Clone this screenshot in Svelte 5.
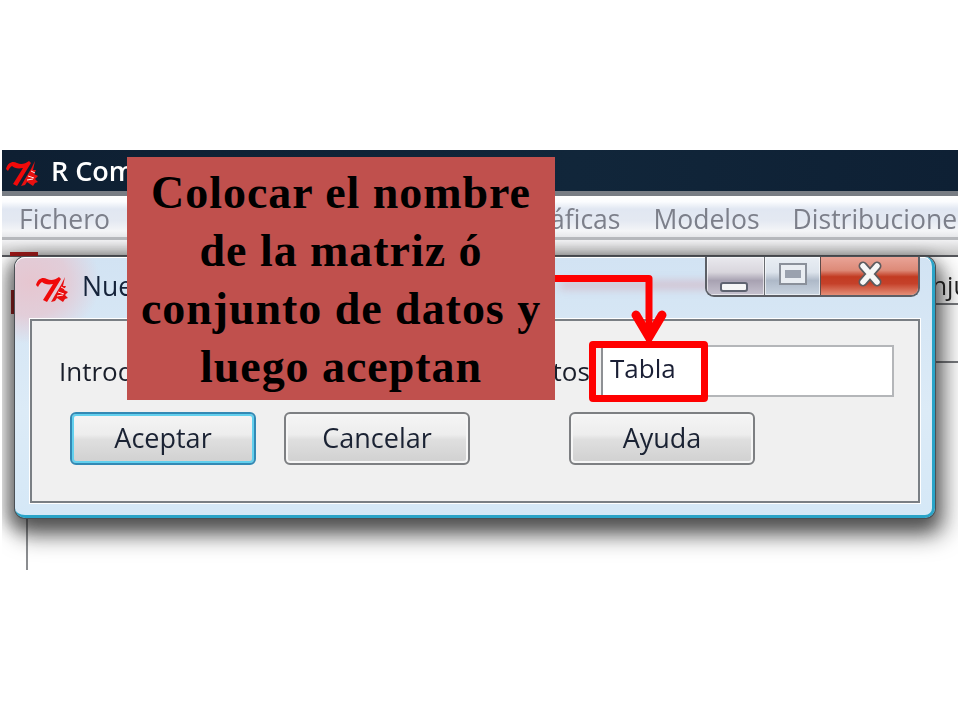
<script>
  const menu = ['Gráficas', 'Modelos', 'Distribuciones'];
  const buttons = [
    { label: 'Aceptar', focus: true },
    { label: 'Cancelar', focus: false },
    { label: 'Ayuda', focus: false }
  ];
  const callout = ['Colocar el nombre', 'de la matriz ó', 'conjunto de datos y', 'luego aceptan'];
</script>

<svg class="defs" width="0" height="0" aria-hidden="true">
  <symbol id="tk" viewBox="0 0 34 28">
    <path d="M1 10C3 3 8 2 12 4C16 6 20 5 24 2L26 4L12 27L8 25L18 9C13 10 9 9 7 7C5 8 4 10 3 12Z" fill="#f00a0a" />
    <path d="M30 2L26 10L20 20L16 27L20 26L22 23L28 27L30 24L33 23L30 20L33 17L29 15L31 11L28 11Z" fill="#e81010" />
    <path d="M23 17l6 2M22 21l6-1M26 12l4 2" stroke="#fff" stroke-width="0.9" fill="none" />
  </symbol>
</svg>

<div class="page">
  <section class="shot">
    <header class="appbar">
      <svg class="tk big"><use href="#tk" /></svg>
      <span class="apptitle">R Commander</span>
    </header>
    <nav class="menu">
      <span>Fichero</span>
      {#each menu as item, i}
        <span class:far={i === 0}>{item}</span>
      {/each}
    </nav>
    <div class="toolbar"></div>
    <div class="workspace"></div>
    <i class="mark top"></i>
    <i class="mark side"></i>
    <i class="sideline one"></i>
    <i class="sideline two"></i>
    <span class="behind">Conjunto</span>

    <div class="dialog">
      <div class="dtitle">
        <svg class="tk small"><use href="#tk" /></svg>
        <span class="dname">Nuevo conjunto</span>
        <i class="streak"></i>
        <div class="controls">
          <span class="ctl min"><i></i></span>
          <span class="ctl max"><i></i></span>
          <span class="ctl close">
            <svg width="30" height="28" viewBox="0 0 30 28">
              <path d="M8 6L22 22M22 6L8 22" fill="none" stroke="#5c5c60" stroke-width="9" stroke-linecap="round" />
              <path d="M8 6L22 22M22 6L8 22" fill="none" stroke="#f6f6f6" stroke-width="5.5" stroke-linecap="round" />
            </svg>
          </span>
        </div>
      </div>
      <div class="panel">
        <div class="row">
          <label for="nombre">Introduzca el nombre del conjunto de datos</label>
          <input id="nombre" value="Tabla" />
        </div>
        <div class="actions">
          {#each buttons as b}
            <button class:focus={b.focus}>{b.label}</button>
          {/each}
        </div>
      </div>
    </div>
  </section>

  <div class="callout">
    {#each callout as line}
      <div>{line}</div>
    {/each}
  </div>
  <div class="redbox"></div>
  <svg class="arrow" width="120" height="72" viewBox="0 0 120 72">
    <path d="M0 3.5H94V58" fill="none" stroke="#f00" stroke-width="7" stroke-linejoin="round" />
    <path d="M81 40L94 62L107 40" fill="none" stroke="#f00" stroke-width="9" stroke-linecap="round" />
  </svg>
</div>

<style>
  :global(body) {
    margin: 0;
    background: #fff;
  }
  .defs {
    position: absolute;
  }
  .page {
    position: relative;
    width: 960px;
    height: 720px;
    padding: 150px 2px;
    box-sizing: border-box;
    background: #fff;
    overflow: hidden;
  }
  .shot {
    position: relative;
    width: 956px;
    height: 420px;
    overflow: hidden;
    background: #fff;
    font-family: "Open Sans", "Noto Sans", sans-serif;
    filter: blur(0.6px);
  }
  .appbar {
    height: 41px;
    display: flex;
    align-items: center;
    gap: 12px;
    padding-left: 3px;
    background: linear-gradient(90deg, #0e1f32, #11263a 60%, #0e2034);
    border-bottom: 5px solid #787d84;
    box-sizing: content-box;
  }
  .tk.big {
    width: 34px;
    height: 28px;
    margin-top: 5px;
  }
  .apptitle {
    color: #fff;
    font-size: 27px;
    font-weight: 600;
  }
  .menu {
    height: 44px;
    display: flex;
    align-items: center;
    gap: 33px;
    padding: 4px 0 0 17px;
    color: #7c7f8a;
    font-size: 26.5px;
    white-space: nowrap;
    background: linear-gradient(180deg, #fff 0, #fbfcfe 14%, #e1e7f2 32%, #e4e9f2 60%, #f4f5f7 85%, #e6e7ea 100%);
    border-bottom: 3px solid #b6b8bc;
    box-sizing: border-box;
  }
  .far {
    margin-left: 377px;
  }
  .toolbar {
    height: 15px;
    background: linear-gradient(180deg, #f1f1f3, #c8c8c8);
    border-bottom: 2px solid #55575c;
  }
  .workspace {
    position: absolute;
    left: 24px;
    top: 104px;
    bottom: 0;
    width: 2px;
    background: #8b8d90;
  }
  .mark {
    position: absolute;
    background: #a01818;
  }
  .mark.top {
    left: 8px;
    top: 102px;
    width: 28px;
    height: 4px;
  }
  .mark.side {
    left: 9px;
    top: 140px;
    width: 5px;
    height: 24px;
  }
  .sideline {
    position: absolute;
    left: 930px;
    right: 0;
    height: 2px;
    background: #77797d;
  }
  .sideline.one {
    top: 153px;
  }
  .sideline.two {
    top: 211px;
  }
  .behind {
    position: absolute;
    left: 899px;
    top: 118px;
    font-size: 25px;
    color: #222;
  }
  .dialog {
    position: absolute;
    left: 13px;
    top: 107px;
    width: 920px;
    height: 261px;
    box-sizing: border-box;
    padding: 0 13px 12px 15px;
    display: flex;
    flex-direction: column;
    border-radius: 10px;
    background:
      radial-gradient(ellipse 70px 62px at 15px 25px, #e6c6d0 0, rgba(230, 198, 208, 0.75) 55%, rgba(230, 198, 208, 0) 100%),
      linear-gradient(180deg, #d2e3f3, #dcebf7 60%, #d5e8f7);
    border-right: 3px solid #2aa4c8;
    border-bottom: 3px solid #2aa4c8;
    box-shadow: inset 0 1px 0 #fff, 0 0 0 1px #4b5055, 5px 13px 22px 5px rgba(20, 20, 20, 0.55), -4px 6px 16px 5px rgba(20, 20, 20, 0.42);
  }
  .dtitle {
    height: 62px;
    flex: none;
    display: flex;
    align-items: flex-start;
    position: relative;
  }
  .tk.small {
    width: 34px;
    height: 28px;
    margin: 18px 0 0 5px;
  }
  .dname {
    margin: 11px 0 0 13px;
    font-size: 26.5px;
    color: #15233a;
    white-space: nowrap;
  }
  .streak {
    position: absolute;
    left: 530px;
    top: 24px;
    width: 150px;
    height: 8px;
    background: rgba(205, 120, 135, 0.35);
    filter: blur(4px);
  }
  .controls {
    position: absolute;
    left: 675px;
    top: 0;
    width: 215px;
    height: 40px;
    display: flex;
    box-sizing: border-box;
    border: 2px solid #5c5f66;
    border-top: none;
    border-radius: 0 0 9px 9px;
    overflow: hidden;
  }
  .ctl {
    display: flex;
    align-items: center;
    justify-content: center;
    box-sizing: border-box;
  }
  .min {
    width: 58px;
    padding-right: 4px;
    background: linear-gradient(180deg, #e9e9ee 0, #d9d6dd 40%, #a8a2b2 62%, #c6c2cf 100%);
    border-right: 1px solid #6a6d72;
    box-shadow: inset 0 0 0 1px rgba(255,255,255,.6);
  }
  .min i {
    width: 24px;
    height: 6px;
    margin-top: 22px;
    background: #f6f6f6;
    border: 2px solid #5f6370;
    border-radius: 3px;
  }
  .max {
    width: 56px;
    background: linear-gradient(180deg, #e9eef4 0, #dde4ec 40%, #aeb9c8 62%, #c9d4e0 100%);
    border-right: 1px solid #5e4a48;
    box-shadow: inset 0 0 0 1px rgba(255,255,255,.6);
  }
  .max i {
    width: 16px;
    height: 8px;
    flex: none;
    margin-bottom: 4px;
    border: solid #e9edf2;
    border-width: 5px 4px;
    outline: 2px solid #8a909a;
    background: #9aa1ae;
    box-sizing: content-box;
  }
  .close {
    flex: 1;
    padding-bottom: 5px;
    background: linear-gradient(180deg, #e9a497 0, #dd8a78 35%, #c23b22 52%, #c5412a 70%, #e48f78 100%);
  }
  .panel {
    flex: 1;
    box-sizing: border-box;
    background: #f0f0f0;
    border: 2px solid #7a7f84;
    box-shadow: 0 0 0 1px #fff;
    padding: 24px 24px 0 27px;
    margin-right: -1px;
  }
  .row {
    display: flex;
    align-items: center;
    height: 52px;
  }
  label {
    width: 542px;
    flex: none;
    white-space: nowrap;
    font-size: 26px;
    color: #1a1f2b;
  }
  input {
    width: 293px;
    height: 52px;
    flex: none;
    box-sizing: border-box;
    border: 2px solid #b4b6b9;
    border-left-color: #8e9094;
    background: #fff;
    padding: 0 0 6px 7px;
    margin: 0;
    font: 26px "Open Sans", "Noto Sans", sans-serif;
    color: #1a1f35;
    outline: none;
  }
  .actions {
    display: flex;
    gap: 28px;
    margin: 15px 0 0 11px;
  }
  button {
    width: 186px;
    height: 53px;
    box-sizing: border-box;
    border: 2px solid #7d7f82;
    border-radius: 6px;
    background: linear-gradient(180deg, #f5f5f5 0, #ededed 42%, #dfdfdf 52%, #d0d0d0 100%);
    box-shadow: inset 0 0 0 2px #f6f6f6;
    font: 27px "Open Sans", "Noto Sans", sans-serif;
    color: #1a2233;
    padding: 0 0 2px;
  }
  button:nth-child(3) {
    margin-left: 71px;
  }
  button.focus {
    border-color: #3389b4;
    box-shadow: inset 0 0 0 2px #62d0ee;
  }
  .callout {
    position: absolute;
    left: 127px;
    top: 157px;
    width: 428px;
    height: 243px;
    box-sizing: border-box;
    padding-top: 7px;
    background: #c0504d;
    color: #000;
    font: bold 46px/58px "Liberation Serif", serif;
    letter-spacing: 0.95px;
    text-align: center;
    white-space: nowrap;
  }
  .redbox {
    position: absolute;
    left: 589px;
    top: 341px;
    width: 119px;
    height: 61px;
    box-sizing: border-box;
    border: 7px solid #f00;
    border-radius: 4px;
  }
  .arrow {
    position: absolute;
    left: 555px;
    top: 275px;
  }
</style>
